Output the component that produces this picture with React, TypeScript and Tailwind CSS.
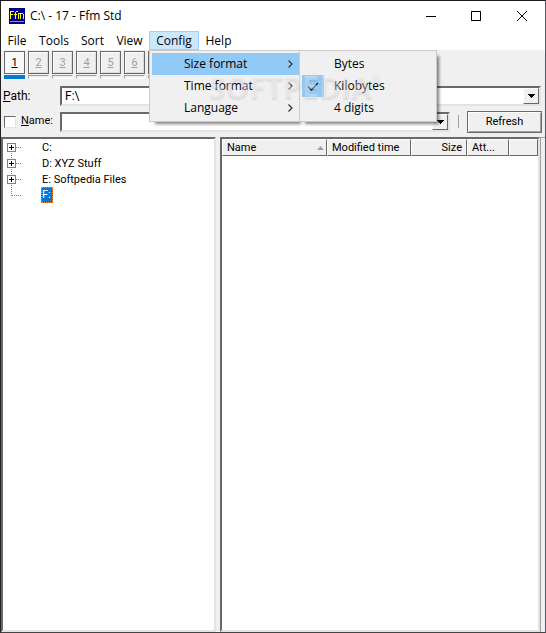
import clsx from "clsx";

const tabs = ["1", "2", "3", "4", "5", "6", "7", "8"];
const drives = ["C:", "D: XYZ Stuff", "E: Softpedia Files", "F:"];

const menuFont = "font-['Open_Sans','Noto_Sans',sans-serif] text-[12px]";
const sunken =
  "border-2 border-t-[#696969] border-l-[#696969] border-r-[#e3e3e3] border-b-[#e3e3e3] bg-white";

function AppIcon() {
  return (
    <svg width="16" height="16" viewBox="0 0 16 16" shapeRendering="crispEdges">
      <rect width="16" height="16" fill="#000080" />
      <path
        d="M1.5 11V3M1 3.5h4M2 6.5h2M6.5 11V4M7 3.5h2M5 6.5h3M9.5 11V5M9 5.5h5M11.5 6v5M14.5 6v5"
        stroke="#ffff00"
        fill="none"
      />
      <path d="M1 13.5h14" stroke="#00ff00" />
    </svg>
  );
}

function TitleBar() {
  return (
    <header className={clsx("flex h-[30px] items-center bg-white pl-2 text-black", menuFont)}>
      <AppIcon />
      <h1 className="ml-[5px] flex-1">C:\ - 17 - Ffm Std</h1>
      <button aria-label="Minimize" className="flex h-full w-[45px] items-center justify-center">
        <svg width="10" height="10" shapeRendering="crispEdges" stroke="#000">
          <path d="M0 5.5h10" />
        </svg>
      </button>
      <button aria-label="Maximize" className="flex h-full w-[46px] items-center justify-center">
        <svg width="10" height="10" shapeRendering="crispEdges" stroke="#000" fill="none">
          <rect x="0.5" y="0.5" width="9" height="9" />
        </svg>
      </button>
      <button aria-label="Close" className="flex h-full w-[46px] items-center justify-center">
        <svg width="10" height="10" stroke="#000">
          <path d="M0 0l10 10M10 0L0 10" />
        </svg>
      </button>
    </header>
  );
}

function MenuItem({ label, active, sub, checked }: { label: string; active?: boolean; sub?: boolean; checked?: boolean }) {
  return (
    <button
      role="menuitem"
      className={clsx("flex h-[22px] w-full items-center text-left", active && "bg-[#91c9f7]")}
    >
      <span className={clsx("flex h-[22px] w-[22px] items-center justify-center", checked && "bg-[#91c9f7]")}>
        {checked && (
          <svg width="12" height="9" fill="none" stroke="#222" strokeWidth="1.3">
            <path d="M1 4.5l3.5 3.5L11 1" />
          </svg>
        )}
      </span>
      <span className="flex-1 pl-[10px]">{label}</span>
      {sub && (
        <svg width="5" height="8" className="mr-[6px]" fill="none" stroke="#333" strokeWidth="1.2">
          <path d="M0.5 0.5L4 4L0.5 7.5" />
        </svg>
      )}
    </button>
  );
}

function ConfigMenu() {
  return (
    <div className="absolute top-full left-0 z-10 flex text-black">
      <div role="menu" className="w-[150px] border border-r-0 border-[#ccc] bg-[#f0f0f0] py-[2px] pl-[2px] shadow-[4px_4px_3px_-2px_rgba(0,0,0,0.5)]">
        <MenuItem label="Size format" active sub />
        <MenuItem label="Time format" sub />
        <MenuItem label="Language" sub />
      </div>
      <div role="menu" className="w-[138px] border border-[#ccc] bg-[#f0f0f0] p-[2px] shadow-[4px_4px_3px_-2px_rgba(0,0,0,0.5)]">
        <MenuItem label="Bytes" />
        <MenuItem label="Kilobytes" checked />
        <MenuItem label="4 digits" />
      </div>
      <div className="pointer-events-none absolute top-[17px] left-[60px] flex items-start font-['Open_Sans',sans-serif] text-[30px] leading-[40px] font-bold text-[#f6f6f6]/40 [text-shadow:0_2px_2px_rgba(0,0,0,0.09)]">
        SOFTPEDIA<span className="text-[10px] leading-[20px]">®</span>
      </div>
    </div>
  );
}

function MenuBar() {
  return (
    <nav className={clsx("flex h-[19px] bg-white text-black", menuFont)}>
      <button className="w-[32px] text-center">File</button>
      <button className="w-[42px] text-center">Tools</button>
      <button className="w-[35px] text-center">Sort</button>
      <button className="w-[39px] text-center">View</button>
      <div className="relative">
        <button className="h-[19px] w-[50px] border border-[#99d1ff] bg-[#cce8ff] text-center leading-[17px]">
          Config
        </button>
        <ConfigMenu />
      </div>
      <button className="w-[39px] text-center">Help</button>
    </nav>
  );
}

function TabStrip() {
  return (
    <div className="flex h-[36px] gap-[3px] pt-px pl-[3px]">
      {tabs.map((tab, i) => (
        <div key={tab} className="w-[21px]">
          <button
            className={clsx(
              "block h-[23px] w-[21px] border border-[#696969] text-center leading-[21px] underline",
              i === 0
                ? "bg-[#f8f8f8] text-black"
                : "bg-[#f0f0f0] text-[#a0a0a0] shadow-[inset_1px_1px_0_#fff,inset_-1px_-1px_0_#dcdcdc]"
            )}
          >
            {tab}
          </button>
          <div
            className={clsx(
              "mt-px h-[4px]",
              i === 0 ? "bg-[#0078d7]" : "border border-t-[#a0a0a0] border-l-[#a0a0a0] border-r-white border-b-white"
            )}
          />
        </div>
      ))}
    </div>
  );
}

function Combo({ id, value, className }: { id: string; value: string; className?: string }) {
  return (
    <div className={clsx("relative h-[20px]", sunken, className)}>
      <select id={id} className="block h-full w-full appearance-none bg-white pl-[3px] text-[12px] leading-[16px] text-black outline-none">
        <option>{value}</option>
      </select>
      <span className="pointer-events-none absolute inset-y-0 right-0 flex w-[16px] items-center justify-center border border-t-white border-l-white border-r-[#696969] border-b-[#696969] bg-[#f0f0f0]">
        <svg width="7" height="4" shapeRendering="crispEdges">
          <path d="M0 0h7L3.5 4z" />
        </svg>
      </span>
    </div>
  );
}

function Filters() {
  return (
    <div>
      <div className="flex h-[20px] items-center pr-[4px]">
        <label htmlFor="path" className="w-[59px] pl-[2px] text-[12px]">
          <u>P</u>ath:
        </label>
        <Combo id="path" value="F:\" className="flex-1" />
      </div>
      <div className="mt-[3px] flex h-[25px] items-center pr-[3px]">
        <input
          id="use-name"
          type="checkbox"
          aria-label="Filter by name"
          className="ml-[3px] h-[12px] w-[12px] appearance-none border border-t-[#696969] border-l-[#696969] border-r-[#e3e3e3] border-b-[#e3e3e3] bg-white"
        />
        <label htmlFor="name" className="w-[44px] pl-[5px]">
          <u>N</u>ame:
        </label>
        <Combo id="name" value="" className="flex-1" />
        <span className="mx-[8px] h-[13px] w-px bg-[#a0a0a0]" />
        <button className="h-[22px] w-[75px] border border-[#696969] bg-[#f0f0f0] text-center leading-[18px] shadow-[inset_1px_1px_0_#fff,inset_-1px_-1px_0_#a0a0a0]">
          Refresh
        </button>
      </div>
    </div>
  );
}

function TreeNode({ label, index }: { label: string; index: number }) {
  const last = index === drives.length - 1;
  return (
    <li className="flex h-[16px] items-center">
      <svg width="16" height="16" className="mr-[19px] ml-[3px]" shapeRendering="crispEdges" fill="none">
        <path
          d={last ? "M5.5 0v9" : index === 0 ? "M5.5 8v8" : "M5.5 0v16"}
          stroke="#808080"
          strokeDasharray="1 1"
        />
        <path d="M6 8.5h10" stroke="#808080" strokeDasharray="1 1" />
        {!last && (
          <>
            <rect x="1.5" y="4.5" width="8" height="8" fill="#fff" stroke="#808080" />
            <path d="M3 8.5h5M5.5 6v5" stroke="#000" />
          </>
        )}
      </svg>
      <span
        className={clsx(
          "h-[16px]",
          last
            ? "border border-dotted border-[#ff8728] bg-[#0078d7] pr-px leading-[14px] text-white"
            : "pl-px leading-[18px]"
        )}
      >
        {label}
      </span>
    </li>
  );
}

const headCell =
  "h-[17px] border border-t-white border-l-white border-r-[#696969] border-b-[#696969] bg-[#f0f0f0] px-[4px] font-normal leading-[15px]";

function FileList() {
  return (
    <table className="w-full table-fixed border-separate border-spacing-0">
      <thead>
        <tr>
          <th className={clsx(headCell, "w-[105px] text-left")}>
            <span className="flex items-center justify-between">
              Name
              <svg width="7" height="4" className="-mr-[2px]">
                <path d="M0 4h7L3.5 0z" fill="#a0a0a0" />
              </svg>
            </span>
          </th>
          <th className={clsx(headCell, "w-[84px] text-left")}>Modified time</th>
          <th className={clsx(headCell, "w-[56px] text-right")}>Size</th>
          <th className={clsx(headCell, "w-[42px] text-left")}>Att...</th>
          <th className={headCell} />
        </tr>
      </thead>
    </table>
  );
}

export default function App() {
  return (
    <div className="flex min-h-screen flex-col border border-t-[#1b1a22] border-l-[#222] border-r-[#5a5a66] border-b-[#444] bg-[#f0f0f0] font-['Roboto','Noto_Sans',sans-serif] text-[11px] text-black">
      <TitleBar />
      <MenuBar />
      <TabStrip />
      <Filters />
      <main className="mt-[3px] flex flex-1 gap-[4px]">
        <ul className={clsx("w-[215px] shrink-0", sunken)}>
          {drives.map((drive, i) => (
            <TreeNode key={drive} label={drive} index={i} />
          ))}
        </ul>
        <section className={clsx("min-w-0 flex-1", sunken)}>
          <FileList />
        </section>
        <div className="-ml-[4px] w-[5px] border-t border-l border-[#a0a0a0]" />
      </main>
    </div>
  );
}
